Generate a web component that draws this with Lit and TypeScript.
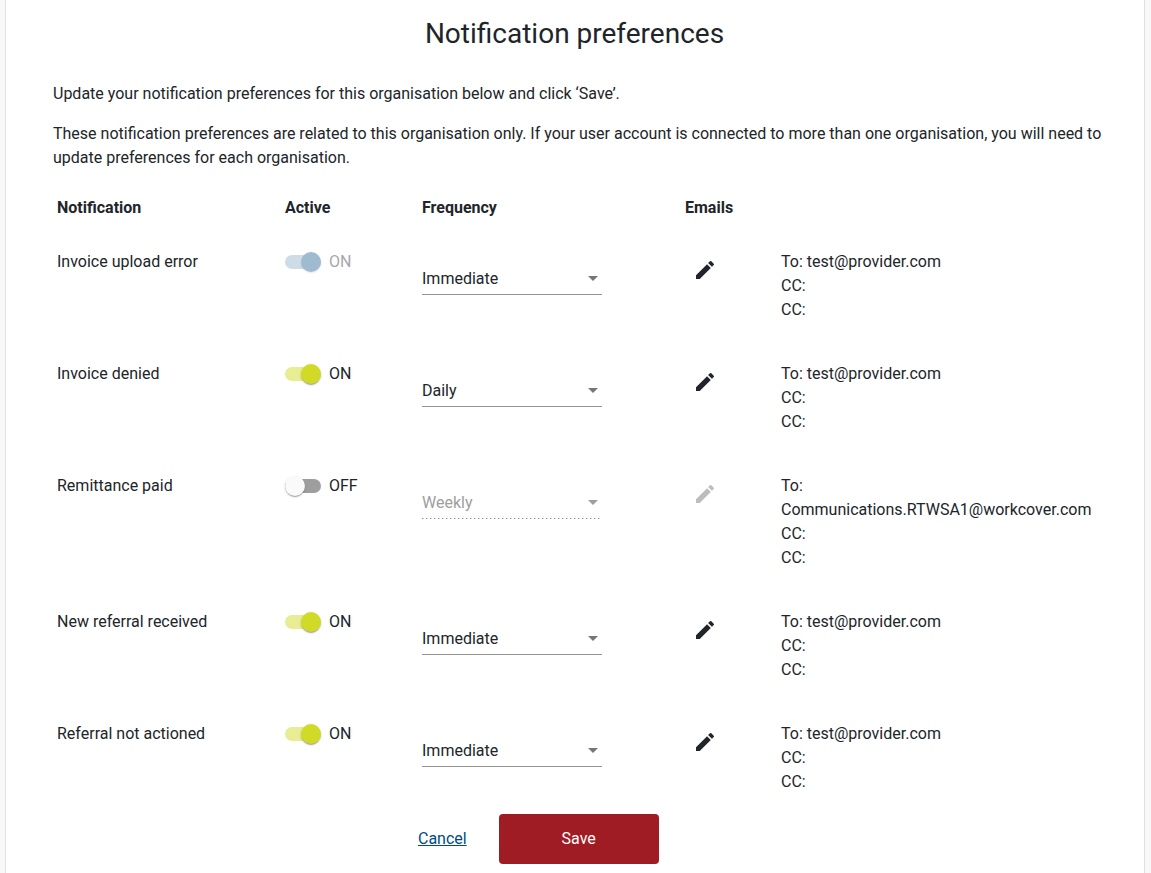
import { LitElement, html, css } from "lit";
import { customElement, property, state } from "lit/decorators.js";

interface Preference {
  id: string;
  name: string;
  active: boolean;
  locked?: boolean;
  frequency: string;
  to: string;
  cc: string[];
}

const FREQUENCIES = ["Immediate", "Daily", "Weekly"];

@customElement("slide-toggle")
class SlideToggle extends LitElement {
  @property({ type: Boolean }) checked = false;
  @property({ type: Boolean }) disabled = false;
  @property() name = "";

  static styles = css`
    :host {
      display: block;
    }
    .toggle {
      display: inline-flex;
      align-items: center;
      gap: 8px;
      height: 24px;
      vertical-align: top;
      cursor: pointer;
    }
    .track {
      appearance: none;
      position: relative;
      width: 36px;
      height: 14px;
      margin: 0;
      border-radius: 8px;
      background: #9e9e9e;
      cursor: inherit;
    }
    .track::before {
      content: "";
      position: absolute;
      top: -3px;
      left: 0;
      width: 20px;
      height: 20px;
      border-radius: 50%;
      background: #fafafa;
      box-shadow: 0 2px 1px -1px rgba(0, 0, 0, 0.2), 0 1px 1px rgba(0, 0, 0, 0.14),
        0 1px 3px rgba(0, 0, 0, 0.12);
    }
    .track:checked {
      background: #e8ed93;
    }
    .track:checked::before {
      left: 16px;
      background: #d1db27;
    }
    .track:disabled:checked {
      background: #cddce6;
    }
    .track:disabled:checked::before {
      background: #9fbbd0;
    }
    .track:disabled::before {
      box-shadow: 0 1px 2px rgba(0, 0, 0, 0.1);
    }
    .off {
      color: #a6a8a9;
      cursor: default;
    }
  `;

  render() {
    return html`<label class="toggle ${this.disabled ? "off" : ""}">
      <input
        class="track"
        type="checkbox"
        aria-label="${this.name} active"
        .checked=${this.checked}
        ?disabled=${this.disabled}
        @change=${this.onChange}
      />
      <span>${this.checked ? "ON" : "OFF"}</span>
    </label>`;
  }

  private onChange(event: Event) {
    this.checked = (event.target as HTMLInputElement).checked;
    this.dispatchEvent(new CustomEvent("toggle", { detail: this.checked }));
  }
}

@customElement("app-root")
class AppRoot extends LitElement {
  @state() private preferences: Preference[] = [
    { id: "upload", name: "Invoice upload error", active: true, locked: true, frequency: "Immediate", to: "test@provider.com", cc: ["", ""] },
    { id: "denied", name: "Invoice denied", active: true, frequency: "Daily", to: "test@provider.com", cc: ["", ""] },
    { id: "remittance", name: "Remittance paid", active: false, frequency: "Weekly", to: "Communications.RTWSA1@workcover.com", cc: ["", ""] },
    { id: "referral", name: "New referral received", active: true, frequency: "Immediate", to: "test@provider.com", cc: ["", ""] },
    { id: "unactioned", name: "Referral not actioned", active: true, frequency: "Immediate", to: "test@provider.com", cc: ["", ""] },
  ];

  static styles = css`
    :host {
      --col-name: 228px;
      --col-active: 137px;
      display: block;
      min-height: 100vh;
      padding-right: 1px;
      background: #f8f8f8;
      color: #212529;
      font: 16px/24px Roboto, sans-serif;
    }
    .card {
      box-sizing: border-box;
      max-width: 1140px;
      min-height: 100vh;
      margin: 0 auto;
      padding: 17px 32px 8px 47px;
      border: solid #dee2e6;
      border-width: 0 1px;
      background: #fff;
    }
    h1 {
      margin: 0 16px 31px 0;
      font-size: 28px;
      line-height: 34px;
      font-weight: 400;
      text-align: center;
    }
    p {
      margin: 0 0 16px;
    }
    table {
      width: 100%;
      table-layout: fixed;
      border-collapse: collapse;
    }
    th,
    td {
      padding: 20px 4px;
      text-align: left;
      vertical-align: top;
      font-weight: 400;
    }
    thead th {
      box-sizing: border-box;
      padding: 10px 4px;
      font-weight: 700;
    }
    .name {
      width: var(--col-name);
    }
    .active {
      width: var(--col-active);
    }
    .frequency {
      width: 263px;
    }
    .edit {
      width: 96px;
    }
    .field {
      display: grid;
      align-items: center;
      width: 180px;
      margin-top: 16px;
    }
    .field > * {
      grid-area: 1 / 1;
    }
    .arrow {
      justify-self: end;
      margin: 0 4px 4px 0;
      border: 5px solid transparent;
      border-top-color: #757575;
      border-bottom: 0;
      pointer-events: none;
    }
    select {
      appearance: none;
      box-sizing: border-box;
      width: 100%;
      height: 29px;
      margin: 0;
      padding: 0 16px 2px 0;
      border: 0;
      border-bottom: 1px solid #949494;
      border-radius: 0;
      background: transparent;
      color: inherit;
      font: inherit;
    }
    select:disabled {
      border-bottom-color: transparent;
      background: repeating-linear-gradient(to right, #949494 0 1px, #d0d0d0 1px 2px, transparent 2px 4px) 0 100% / 178px
        1px no-repeat border-box;
      color: #9e9e9e;
      opacity: 1;
    }
    select:disabled + .arrow {
      border-top-color: #9e9e9e;
    }
    .pencil {
      display: grid;
      place-items: center;
      width: 40px;
      height: 40px;
      padding: 0;
      border: 0;
      background: none;
      color: #212529;
      cursor: pointer;
    }
    .pencil:disabled {
      color: #bdbdbd;
      cursor: default;
    }
    .pencil svg {
      width: 24px;
      height: 24px;
      fill: currentColor;
    }
    .actions {
      display: flex;
      align-items: center;
      gap: 32px;
      padding-left: calc(var(--col-name) + var(--col-active));
    }
    .cancel {
      color: #004b85;
      text-decoration: underline;
    }
    .save {
      width: 160px;
      height: 50px;
      padding: 0;
      border: 0;
      border-radius: 4px;
      background: #a01c24;
      color: #fff;
      font: inherit;
      cursor: pointer;
    }
  `;

  render() {
    return html`<main class="card">
      <h1>Notification preferences</h1>
      <p>Update your notification preferences for this organisation below and click ‘Save’.</p>
      <p>
        These notification preferences are related to this organisation only. If your user account is connected to more
        than one organisation, you will need to update preferences for each organisation.
      </p>
      <form @submit=${(e: Event) => e.preventDefault()}>
        <table>
          <thead>
            <tr>
              <th class="name" scope="col">Notification</th>
              <th class="active" scope="col">Active</th>
              <th class="frequency" scope="col">Frequency</th>
              <th class="edit" scope="col">Emails</th>
              <td></td>
            </tr>
          </thead>
          <tbody>
            ${this.preferences.map((p) => this.renderRow(p))}
          </tbody>
        </table>
        <div class="actions">
          <a class="cancel" href="#">Cancel</a>
          <button class="save" type="submit">Save</button>
        </div>
      </form>
    </main>`;
  }

  private renderRow(p: Preference) {
    return html`<tr>
      <th scope="row">${p.name}</th>
      <td>
        <slide-toggle
          .name=${p.name}
          .checked=${p.active}
          .disabled=${!!p.locked}
          @toggle=${(e: CustomEvent) => this.edit(p.id, { active: e.detail })}
        ></slide-toggle>
      </td>
      <td>
        <div class="field">
          <select
            aria-label="${p.name} frequency"
            ?disabled=${!p.active}
            @change=${(e: Event) => this.edit(p.id, { frequency: (e.target as HTMLSelectElement).value })}
          >
            ${FREQUENCIES.map((f) => html`<option ?selected=${f === p.frequency}>${f}</option>`)}
          </select>
          <span class="arrow"></span>
        </div>
      </td>
      <td>
        <button class="pencil" type="button" aria-label="Edit ${p.name} emails" ?disabled=${!p.active}>
          <svg viewBox="0 0 24 24" aria-hidden="true">
            <path
              d="M3 17.25V21h3.75L17.81 9.94l-3.75-3.75L3 17.25zM20.71 7.04a1 1 0 0 0 0-1.41l-2.34-2.34a1 1 0 0 0-1.41 0l-1.83 1.83 3.75 3.75 1.83-1.83z"
            />
          </svg>
        </button>
      </td>
      <td>
        <div>To: ${p.to}</div>
        ${p.cc.map((address) => html`<div>CC: ${address}</div>`)}
      </td>
    </tr>`;
  }

  private edit(id: string, change: Partial<Preference>) {
    this.preferences = this.preferences.map((p) => (p.id === id ? { ...p, ...change } : p));
  }
}
